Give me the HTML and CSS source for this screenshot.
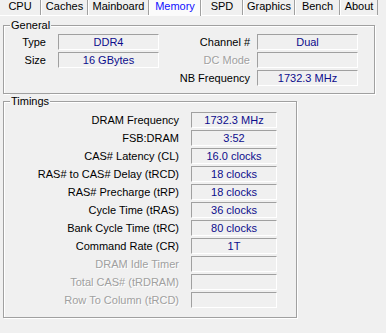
FILE: index.html
```html
<!DOCTYPE html>
<html lang="en">
<head>
  <meta charset="UTF-8">
  <title>CPU-Z Memory</title>
  <link rel="stylesheet" href="styles.css">
</head>
<body>
  <!-- Tab strip -->
  <nav class="tabs">
    <span class="tab tab-cpu">CPU</span>
    <span class="tab tab-caches">Caches</span>
    <span class="tab tab-mainboard">Mainboard</span>
    <span class="tab tab-memory active">Memory</span>
    <span class="tab tab-spd">SPD</span>
    <span class="tab tab-graphics">Graphics</span>
    <span class="tab tab-bench">Bench</span>
    <span class="tab tab-about">About</span>
  </nav>

  <!-- General -->
  <div class="group general">
    <span class="group-title">General</span>
    <div class="general-grid">
      <span class="label left">Type</span>
      <span class="value">DDR4</span>
      <span class="label right">Channel #</span>
      <span class="value">Dual</span>

      <span class="label left">Size</span>
      <span class="value">16 GBytes</span>
      <span class="label right disabled">DC Mode</span>
      <span class="value"></span>

      <span class="label left"></span>
      <span class="blank"></span>
      <span class="label right">NB Frequency</span>
      <span class="value">1732.3 MHz</span>
    </div>
  </div>

  <!-- Timings -->
  <div class="group timings">
    <span class="group-title">Timings</span>
    <div class="timings-grid">
      <span class="label">DRAM Frequency</span>
      <span class="value">1732.3 MHz</span>
      <span class="label">FSB:DRAM</span>
      <span class="value">3:52</span>
      <span class="label">CAS# Latency (CL)</span>
      <span class="value">16.0 clocks</span>
      <span class="label">RAS# to CAS# Delay (tRCD)</span>
      <span class="value">18 clocks</span>
      <span class="label">RAS# Precharge (tRP)</span>
      <span class="value">18 clocks</span>
      <span class="label">Cycle Time (tRAS)</span>
      <span class="value">36 clocks</span>
      <span class="label">Bank Cycle Time (tRC)</span>
      <span class="value">80 clocks</span>
      <span class="label">Command Rate (CR)</span>
      <span class="value">1T</span>
      <span class="label disabled">DRAM Idle Timer</span>
      <span class="value"></span>
      <span class="label disabled">Total CAS# (tRDRAM)</span>
      <span class="value"></span>
      <span class="label disabled">Row To Column (tRCD)</span>
      <span class="value"></span>
    </div>
  </div>
</body>
</html>
```

FILE: styles.css
```css
body {
  margin: 0;
  padding: 0;
  width: 386px;
  height: 333px;
  overflow: hidden;
  background-color: #f0f0f0;
  font-family: "Liberation Sans", Arial, sans-serif;
  font-size: 11px;
  color: #000;
}


/* tabs */
.tabs {
  display: flex;
  height: 15px;
  border-bottom: 1px solid #fff;
  width: 378px;
}

.tab {
  box-sizing: border-box;
  height: 15px;
  line-height: 13px;
  text-align: center;
  border-left: 1px solid #fff;
  border-right: 1px solid #a0a0a0;
}

.tab-cpu { width: 41px; border-left: none; }
.tab-caches { width: 47px; }
.tab-mainboard { width: 61px; }
.tab-memory { width: 52px; }
.tab-spd { width: 42px; }
.tab-graphics { width: 52px; }
.tab-bench { width: 45px; }
.tab-about { width: 38px; }

.tab.active {
  height: 16px;
  background-color: #fbfbfb;
  color: #1010ff;
}


/* group boxes */
.group {
  position: relative;
  box-sizing: border-box;
  margin-left: 3px;
  border: 1px solid #a0a0a0;
  box-shadow: 1px 1px 0 #fff, inset 1px 1px 0 #fff;
}

.group-title {
  position: absolute;
  top: -8px;
  left: 6px;
  padding: 0 1px;
  line-height: 14px;
  background-color: #f0f0f0;
}

.general {
  margin-top: 9px;
  width: 372px;
  padding: 8px 16px 7px 0;
}

.timings {
  margin-top: 7px;
  width: 294px;
  padding: 10px 19px 9px 0;
}


/* rows */
.general-grid {
  display: grid;
  grid-template-columns: 54px 101px 1fr 101px;
  grid-auto-rows: 16px;
  row-gap: 2px;
}

.timings-grid {
  display: grid;
  grid-template-columns: 1fr 86px;
  grid-auto-rows: 16px;
  row-gap: 2px;
}

.label {
  line-height: 16px;
  text-align: right;
  white-space: nowrap;
}

.general-grid .label.left {
  padding-right: 12px;
}

.general-grid .label.right {
  padding-right: 7px;
}

.timings-grid .label {
  padding-right: 12px;
}

.label.disabled {
  color: #a0a0a0;
  text-shadow: 1px 1px 0 #fff;
}

.value {
  box-sizing: border-box;
  height: 16px;
  line-height: 14px;
  text-align: center;
  color: #0c0c8c;
  border-top: 1px solid #a0a0a0;
  border-left: 1px solid #a0a0a0;
  border-bottom: 1px solid #fff;
  border-right: 1px solid #fff;
  white-space: nowrap;
}
```
